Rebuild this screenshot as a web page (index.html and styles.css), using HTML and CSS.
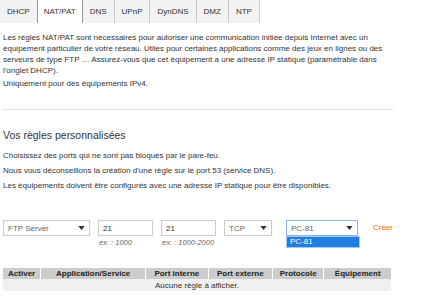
FILE: index.html
```html
<!DOCTYPE html>
<html lang="fr">
<head>
<meta charset="utf-8"/>
<title>NAT/PAT</title>
<link rel="stylesheet" href="styles.css">
</head>
<body>
<ul class="tabs">
  <li>DHCP</li>
  <li class="active">NAT/PAT</li>
  <li>DNS</li>
  <li>UPnP</li>
  <li>DynDNS</li>
  <li>DMZ</li>
  <li>NTP</li>
</ul>
<div class="content">
  <p>Les règles NAT/PAT sont nécessaires pour autoriser une communication initiée depuis Internet avec un équipement particulier de votre réseau. Utiles pour certaines applications comme des jeux en lignes ou des serveurs de type FTP … Assurez-vous que cet équipement a une adresse IP statique (paramétrable dans l'onglet DHCP).</p>
  <p>Uniquement pour des équipements IPv4.</p>
  <hr/>
  <h3>Vos règles personnalisées</h3>
  <p class="note">Choisissez des ports qui ne sont pas bloqués par le pare-feu.</p>
  <p class="note">Nous vous déconseillons la création d'une règle sur le port 53 (service DNS).</p>
  <p class="note">Les équipements doivent être configurés avec une adresse IP statique pour être disponibles.</p>
  <div class="form-row">
    <div class="field">
      <div class="select w-service">FTP Server <svg viewBox="0 0 8 5"><path d="M0 0h8L4 5z"/></svg></div>
    </div>
    <div class="field">
      <div class="input">21</div>
      <span class="hint">ex. : 1000</span>
    </div>
    <div class="field">
      <div class="input">21</div>
      <span class="hint">ex. : 1000-2000</span>
    </div>
    <div class="field">
      <div class="select w-proto">TCP <svg viewBox="0 0 8 5"><path d="M0 0h8L4 5z"/></svg></div>
    </div>
    <div class="field dropdown">
      <div class="select w-device focus">PC-81 <svg viewBox="0 0 8 5"><path d="M0 0h8L4 5z"/></svg></div>
      <div class="menu">PC-81</div>
    </div>
    <a class="create">Créer</a>
  </div>
  <table>
    <thead>
      <tr>
        <th class="c1">Activer</th>
        <th class="c2">Application/Service</th>
        <th class="c3">Port interne</th>
        <th class="c4">Port externe</th>
        <th class="c5">Protocole</th>
        <th class="c6">Équipement</th>
      </tr>
    </thead>
    <tbody>
      <tr><td colspan="6">Aucune règle à afficher.</td></tr>
    </tbody>
  </table>
</div>
</body>
</html>
```

FILE: styles.css
```css
body {
    margin: 0;
    font-family: "Liberation Sans", Arial, sans-serif;
    font-size: 8px;
    color: #333;
    background: #fff;
}
.tabs {
    display: flex;
    margin: 0;
    padding: 0;
    list-style: none;
    height: 23px;
}
.tabs li {
    display: flex;
    align-items: center;
    padding: 0 7px;
    background: #f2f2f2;
    border-right: 1px solid #c8c8c8;
    color: #333;
    font-size: 8px;
}
.tabs li.active {
    background: #fff;
    border-left: 1px solid #999;
    border-right: 1px solid #999;
    margin-left: -1px;
    padding: 0 6px;
}
.content {
    padding: 0 3px;
    width: 390px;
}
p {
    margin: 0;
    line-height: 11px;
}
.content > p:first-child {
    margin-top: 9px;
}
.content > p + p {
    margin-top: 2px;
}
hr {
    border: 0;
    border-top: 1px solid #ddd;
    margin: 20px 0 0 -1px;
}
h3 {
    font-weight: normal;
    font-size: 10.5px;
    color: #333;
    margin: 19px 0 9px;
}
.content p.note {
    margin-top: 3px;
    line-height: 12px;
}
.form-row {
    display: flex;
    align-items: flex-start;
    margin-top: 28px;
    gap: 8px;
}
.field {
    display: flex;
    flex-direction: column;
}
.select, .input {
    height: 14px;
    border: 1px solid #ccc;
    background: #fff;
    display: flex;
    align-items: center;
    padding: 0 4px;
    font-size: 8px;
    color: #666;
    box-sizing: content-box;
}
.select {
    justify-content: space-between;
}
.select svg {
    width: 7px;
    height: 4px;
    fill: #333;
}
.input {
    width: 45px;
    color: #333;
}
.w-service { width: 77px; }
.w-proto { width: 38px; }
.w-device { width: 62px; }
.field.dropdown {
    position: relative;
    margin-left: 6px;
}
.select.focus {
    border-color: #8ab4e8;
}
.menu {
    position: absolute;
    top: 16px;
    left: 0;
    width: 66px;
    padding: 0 3px;
    height: 10px;
    line-height: 10px;
    background: #1f7ee0;
    color: #fff;
    font-size: 8px;
    border: 1px solid #a9c8ee;
}
.hint {
    font-style: italic;
    color: #666;
    font-size: 7.5px;
    margin-top: 2px;
    padding-left: 1px;
}
.create {
    color: #f16e00;
    font-size: 8px;
    margin-left: 7px;
    margin-top: 3px;
}
table {
    width: 390px;
    border-collapse: separate;
    border-spacing: 1px 0;
    margin: 21px 0 0 -1px;
}
th {
    background: #ccc;
    color: #222;
    font-size: 8px;
    font-weight: bold;
    height: 11px;
    padding: 0;
}
td {
    background: #f0f0f0;
    text-align: center;
    height: 12px;
    padding: 0;
    color: #333;
}
.c1 { width: 37px; }
.c2 { width: 103px; }
.c3 { width: 61px; }
.c4 { width: 63px; }
.c5 { width: 50px; }
.c6 { width: 66px; }
```
